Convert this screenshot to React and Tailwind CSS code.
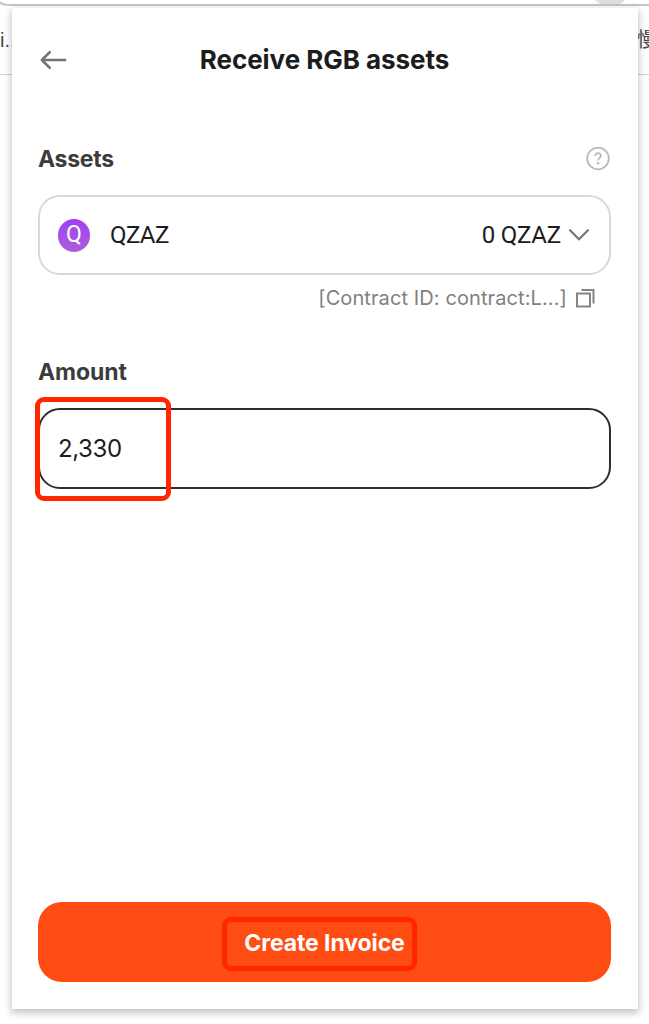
import React, { useState } from 'react';

const BackArrow = () => (
  <svg width="28" height="20" viewBox="0 0 28 20" fill="none" stroke="#757575" strokeWidth="2.5">
    <path d="M27.2 10H3M11.5 1.5L2.8 10l8.7 8.5" strokeLinejoin="round" />
  </svg>
);

const HelpIcon = () => (
  <svg width="24" height="24" viewBox="0 0 24 24" fill="none" stroke="#bdbbb9">
    <circle cx="12" cy="11.5" r="10.8" strokeWidth="1.8" />
    <path d="M9.1 9.1c0-1.8 1.2-2.9 2.9-2.9s2.9 1 2.9 2.6c0 2.2-2.8 2-2.8 4.6" strokeWidth="1.8" />
    <circle cx="12.1" cy="16.3" r="1.3" fill="#bdbbb9" stroke="none" />
  </svg>
);

const ChevronDown = () => (
  <svg width="20" height="12" viewBox="0 0 20 12" fill="none" stroke="#757575" strokeWidth="2.2">
    <path d="M1 1.2l9 9 9-9" strokeLinecap="round" />
  </svg>
);

const CopyIcon = () => (
  <svg width="19" height="19" viewBox="0 0 19 19" fill="none" stroke="#858585" strokeWidth="2">
    <path d="M1 4.6h13v13H1z" />
    <path d="M5.5 1h12v13.5" />
  </svg>
);

// The web page that stays visible around the popup
const PageBehind = () => (
  <div className="absolute inset-0 overflow-hidden font-['Liberation_Sans','Noto_Sans_CJK_SC',sans-serif] text-[20px] text-[#484848]">
    <div className="absolute -top-8 left-[590px] h-[38px] w-[40px] rounded-full bg-[#dedede]" />
    <div className="absolute -left-2 -top-10 h-[46px] w-[680px] rounded-bl-[16px] border-b-2 border-l-2 border-[#c4c4c4]" />
    <div className="absolute left-0 top-[74px] h-px w-full bg-[#d0d0d0]" />
    <span className="absolute left-0 top-[28px] leading-6">i...</span>
    <span className="absolute left-[637px] top-[28px] leading-6">慢</span>
  </div>
);

const App = () => {
  const [amount, setAmount] = useState('2,330');

  return (
    <div className="relative h-[1024px] w-[649px] overflow-hidden bg-white pl-[12px] pt-[8px] font-['Inter',sans-serif] text-[#1c1c1c]">
      <PageBehind />

      <main className="relative flex h-[1001px] w-[626px] flex-col bg-white pb-[27px] pl-[26px] pr-[27px] shadow-[0_3px_7px_1px_rgba(0,10,10,0.24)]">
        <header className="grid h-[104px] grid-cols-[40px_1fr_40px] items-center">
          <button type="button" aria-label="Back" className="pl-px">
            <BackArrow />
          </button>
          <h1 className="whitespace-nowrap text-center text-[26px] font-bold leading-8 tracking-[-0.05px]">
            Receive RGB assets
          </h1>
        </header>

        <section className="mt-[30px]">
          <div className="flex h-[34px] items-center justify-between pr-px">
            <h2 className="text-[23px] font-bold leading-8 tracking-[-0.3px] text-[#3c3c3c]">Assets</h2>
            <HelpIcon />
          </div>
          <button
            type="button"
            className="mt-[19px] flex h-[80px] w-full items-center rounded-[22px] border-2 border-[#d9d9d9] pl-[18px] pr-[20px] font-['Roboto',sans-serif] text-[24px]"
          >
            <span className="flex h-[33px] w-[32px] items-center justify-center rounded-full bg-linear-to-b from-[#a03df2] to-[#ab5fd9] text-[23px] text-white">
              Q
            </span>
            <span className="ml-[20px] tracking-[-0.6px]">QZAZ</span>
            <span className="ml-auto mr-[8px] tracking-[-0.2px]">0 QZAZ</span>
            <ChevronDown />
          </button>
          <div className="mt-[8px] flex h-[30px] items-center justify-end pr-[16px] text-[20px] tracking-[0.1px] text-[#808080]">
            <span>[Contract ID: contract:L...]</span>
            <button type="button" aria-label="Copy contract ID" className="ml-[9px]">
              <CopyIcon />
            </button>
          </div>
        </section>

        <section className="mt-[42px]">
          <h2 className="text-[23px] font-bold leading-[34px] tracking-[-0.1px] text-[#3c3c3c]">Amount</h2>
          <div className="relative mt-[19px]">
            <input
              aria-label="Amount"
              value={amount}
              onChange={(e) => setAmount(e.target.value)}
              className="h-[81px] w-full rounded-[22px] border-2 border-[#2e2e2e] bg-white px-[18px] text-[24px] tracking-[-0.4px] outline-none"
            />
            <div className="pointer-events-none absolute -left-[3px] -top-[11px] h-[104px] w-[136px] rounded-[9px] border-[5px] border-[#ff2600]" />
          </div>
        </section>

        <button
          type="button"
          className="relative mt-auto flex h-[80px] w-full items-center justify-center rounded-[24px] bg-[#ff4c12] pt-[2px] text-[23px] font-bold tracking-[-0.1px] text-white"
        >
          Create Invoice
          <span className="absolute left-[184px] top-[15px] h-[54px] w-[195px] rounded-[9px] border-[5px] border-[#ff2600]" />
        </button>
      </main>
    </div>
  );
};

export default App;
